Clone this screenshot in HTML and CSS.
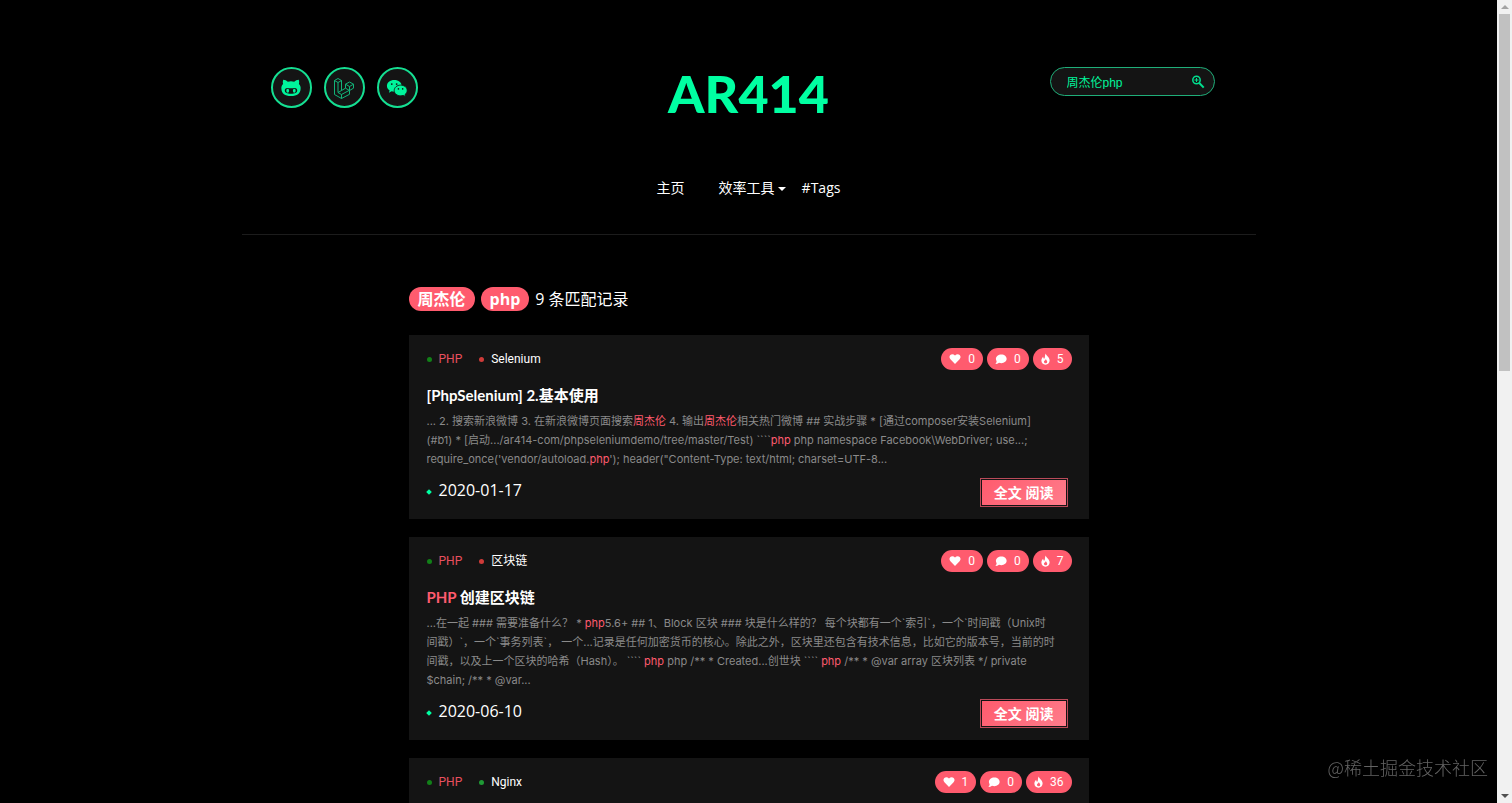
FILE: index.html
```html
<!DOCTYPE html>
<html lang="zh-CN">
<head>
    <meta charset="UTF-8">
    <meta name="viewport" content="width=device-width, initial-scale=1.0">
    <title>AR414</title>
    <link rel="stylesheet" href="styles.css">
</head>
<body>
    <svg class="sprite" aria-hidden="true">
        <symbol id="heart" viewBox="0 0 16 16"><path d="M8 14.5 1.9 8.3C-2 4.2 3.8-1 8 3.4 12.2-1 18 4.2 14.1 8.3z"/></symbol>
        <symbol id="comment" viewBox="0 0 16 16"><path d="M8.5 2C12.700 2 15.500 4.500 15.500 7.800S12.500 13.500 8.500 13.500c-1.100 0-2.200-.200-3.100-.600C4 14 2.300 14.500.500 14.500c1-1 1.600-2.200 1.700-3.500C1.500 10.100 1.200 9 1.200 7.800 1.200 4.500 4.300 2 8.500 2z"/></symbol>
        <symbol id="fire" viewBox="2 0 12 16"><path fill-rule="evenodd" d="M8.300.500c.300 2.900 5.200 4.700 5.200 9.200 0 3.400-2.400 5.800-5.500 5.800s-5.500-2.300-5.500-5.500c0-2.200 1-3.800 2.500-5.100 0 1.400.3 2.400 1.300 2.700C7.900 6.200 6.600 3 8.300.500zM8.500 8c-.2 1.800-2.600 2-2.600 3.700 0 1.200 1 2 2.200 2s2.200-.8 2.200-2.100C10.300 10.100 8.900 9.600 8.500 8z"/></symbol>
    </svg>

    <div class="page">
        <header class="header">
            <div class="top">
                <div class="social">
                    <a href="#github" aria-label="GitHub">
                        <svg width="20" height="18" viewBox="0 0 20 18"><path fill="currentColor" fill-rule="evenodd" d="M2.300.800c1.700 0 3.200.8 4.500 1.900a16 16 0 0 1 6.400 0C14.500 1.600 16 .8 17.700.800c.6 1.400.6 2.900.2 4.200C19.300 6.300 19.800 8 19.600 10c-.4 4.700-3.300 7-9.600 7S.8 14.700.400 10C.2 8 .7 6.300 2.100 5 1.700 3.700 1.700 2.200 2.300.800zM6.300 9c-1.800 0-2.500 1.200-2.500 2.600 0 2.500 2.200 3.200 6.200 3.200s6.200-.7 6.200-3.200c0-1.400-.7-2.600-2.500-2.600-1.300 0-2.300.3-3.700.3S7.600 9 6.300 9z"/><ellipse cx="6.700" cy="11.800" rx="1.400" ry="2" fill="currentColor"/><ellipse cx="13.300" cy="11.800" rx="1.400" ry="2" fill="currentColor"/></svg>
                    </a>
                    <a href="#laravel" aria-label="Laravel">
                        <svg width="22" height="22" viewBox="0 0 22 22"><path fill="none" stroke="currentColor" stroke-width="1" stroke-linejoin="round" d="M1.500 3.500 5 1.500l3.500 2v10l4-2.300v-4L16.500 5l4 2.200v4l-4 2.300v3.800l-8 4.200-7-4zM1.500 3.500l3.500 2 3.500-2M5 5.500v10l3.500 2 8-4.300M8.500 17.500v4M12.500 7.200l4 2.300 4-2.300M16.500 9.500v4M12.500 11.200l4 2.300M5 15.500l3.500-2"/></svg>
                    </a>
                    <a href="#wechat" aria-label="WeChat">
                        <svg width="22" height="18" viewBox="0 0 24 20"><path fill="currentColor" d="M9 1C4.200 1 .800 3.900.800 7.600c0 2.200 1.100 4 3 5.200L3 15.200l3-1.500c.9.300 1.900.5 3 .5C13.800 14.200 17.200 11.300 17.200 7.600S13.800 1 9 1z"/><path fill="currentColor" stroke="#141414" d="M16 6.800c4 0 7.300 2.500 7.300 6 0 1.900-.9 3.400-2.400 4.500l.6 2.200-2.600-1.300c-.9.300-1.800.5-2.900.5-4 0-7.100-2.500-7.100-5.900s3.100-6 7.100-6z"/><g fill="#141414"><circle cx="6.200" cy="5.600" r="1"/><circle cx="11.600" cy="5.600" r="1"/><circle cx="13.600" cy="11" r=".9"/><circle cx="18.300" cy="11" r=".9"/></g></svg>
                    </a>
                </div>
                <a class="logo" href="#home">AR414</a>
                <form class="search">
                    <input type="text" value="周杰伦php" aria-label="搜索">
                    <button type="button" aria-label="搜索">
                        <svg width="14" height="14" viewBox="0 0 14 14" fill="none" stroke="currentColor"><circle cx="5.500" cy="5" r="3.700" stroke-width="1.500"/><path stroke-width="2" d="m8.300 8 4.400 4.600"/><path d="M5.500 3v4M3.500 5h4"/></svg>
                    </button>
                </form>
            </div>
            <nav class="nav">
                <a href="#home">主页</a>
                <a class="dropdown" href="#tools">效率工具</a>
                <a href="#tags">#Tags</a>
            </nav>
        </header>

        <main class="results">
            <h1 class="summary"><mark>周杰伦</mark><mark>php</mark><span>9 条匹配记录</span></h1>

            <article class="card">
                <div class="meta">
                    <a class="cat php" href="#php">PHP</a>
                    <a class="cat red" href="#selenium">Selenium</a>
                    <div class="stats">
                        <span><svg><use href="#heart"/></svg>0</span>
                        <span><svg><use href="#comment"/></svg>0</span>
                        <span><svg class="fire"><use href="#fire"/></svg>5</span>
                    </div>
                </div>
                <h2>[PhpSelenium] 2.基本使用</h2>
                <p>... 2. 搜索新浪微博 3. 在新浪微博页面搜索<em>周杰伦</em> 4. 输出<em>周杰伦</em>相关热门微博 ## 实战步骤 * [通过composer安装Selenium]<br>(#b1) * [启动.../ar414-com/phpseleniumdemo/tree/master/Test) ````<em>php</em> php namespace Facebook\WebDriver; use...;<br>require_once('vendor/autoload.<em>php</em>'); header("Content-Type: text/html; charset=UTF-8...</p>
                <div class="foot">
                    <time datetime="2020-01-17">2020-01-17</time>
                    <a class="more" href="#post-1">全文 阅读</a>
                </div>
            </article>

            <article class="card">
                <div class="meta">
                    <a class="cat php" href="#php">PHP</a>
                    <a class="cat red" href="#blockchain">区块链</a>
                    <div class="stats">
                        <span><svg><use href="#heart"/></svg>0</span>
                        <span><svg><use href="#comment"/></svg>0</span>
                        <span><svg class="fire"><use href="#fire"/></svg>7</span>
                    </div>
                </div>
                <h2><em>PHP</em> 创建区块链</h2>
                <p>...在一起 ### 需要准备什么？ * <em>php</em>5.6+ ## 1、Block 区块 ### 块是什么样的？ 每个块都有一个`索引`，一个`时间戳（Unix时<br>间戳）`，一个`事务列表`， 一个...记录是任何加密货币的核心。除此之外，区块里还包含有技术信息，比如它的版本号，当前的时<br>间戳，以及上一个区块的哈希（Hash）。 ```` <em>php</em> php /** * Created...创世块 ```` <em>php</em> /** * @var array 区块列表 */ private<br>$chain; /** * @var...</p>
                <div class="foot">
                    <time datetime="2020-06-10">2020-06-10</time>
                    <a class="more" href="#post-2">全文 阅读</a>
                </div>
            </article>

            <article class="card">
                <div class="meta">
                    <a class="cat php" href="#php">PHP</a>
                    <a class="cat green" href="#nginx">Nginx</a>
                    <div class="stats">
                        <span><svg><use href="#heart"/></svg>1</span>
                        <span><svg><use href="#comment"/></svg>0</span>
                        <span><svg class="fire"><use href="#fire"/></svg>36</span>
                    </div>
                </div>
            </article>
        </main>
    </div>

    <div class="scrollbar" aria-hidden="true">
        <i class="up"></i>
        <div class="thumb"></div>
        <i class="down"></i>
    </div>
    <div class="watermark">@稀土掘金技术社区</div>
</body>
</html>
```
FILE: styles.css
```css
* {
    margin: 0;
    padding: 0;
    box-sizing: border-box;
}

body {
    display: flex;
    height: 100vh;
    overflow: hidden;
    background: #000;
    color: #fff;
    font-family: "Open Sans", "Noto Sans CJK SC", sans-serif;
    font-size: 14px;
}

a {
    color: inherit;
    text-decoration: none;
}

em {
    color: #ff5b6e;
    font-style: normal;
}

.sprite {
    position: absolute;
    width: 0;
    height: 0;
}

.page {
    flex: 1;
    overflow: hidden;
}

/* header */
.header {
    max-width: 1014px;
    margin: 0 auto;
    padding-top: 67px;
    border-bottom: 1px solid #1c1c1c;
}

.top {
    display: grid;
    grid-template-columns: 1fr auto 1fr;
    align-items: start;
    height: 104px;
    padding: 0 29px;
}

.social {
    display: flex;
    gap: 12px;
}

.social a {
    display: flex;
    align-items: center;
    justify-content: center;
    width: 41px;
    height: 41px;
    border: 2px solid #15df92;
    border-radius: 50%;
    background: #141414;
    color: #00f59b;
}

.social a:nth-child(2) {
    color: #12b378;
}

.logo {
    color: #00ffa2;
    font-family: Lato, sans-serif;
    font-size: 52px;
    font-weight: 900;
    line-height: 52px;
}

.search {
    display: flex;
    align-items: center;
    justify-self: end;
    width: 165px;
    height: 29px;
    margin-right: 12px;
    padding: 0 9px 0 16px;
    border: 1px solid #1fae79;
    border-radius: 15px;
    background: #141414;
}

.search input {
    flex: 1;
    min-width: 0;
    border: 0;
    outline: 0;
    background: transparent;
    color: #00f59b;
    font-family: "Liberation Sans", "Noto Sans CJK SC", sans-serif;
    font-size: 12px;
}

.search button {
    display: flex;
    border: 0;
    background: transparent;
    color: #00e08f;
    cursor: pointer;
}

.nav {
    display: flex;
    justify-content: center;
    height: 63px;
    line-height: 34px;
}

.nav a:nth-child(2) {
    margin: 0 16px 0 34px;
}

.dropdown::after {
    content: "";
    display: inline-block;
    margin-left: 3px;
    border: 4px solid transparent;
    border-top-color: #fff;
    border-bottom: 0;
    vertical-align: middle;
}

/* search results */
.results {
    display: flex;
    flex-direction: column;
    gap: 18px;
    max-width: 680px;
    margin: 0 auto;
    padding-top: 52px;
}

.summary {
    display: flex;
    align-items: center;
    gap: 6px;
    margin-bottom: 6px;
    font-size: 16px;
    font-weight: 400;
    line-height: 24px;
}

.summary mark {
    padding: 0 9px;
    border-radius: 12px;
    background: #ff5b6e;
    color: #fff;
    font-weight: 700;
}

.card {
    padding: 13px 17px 13px 18px;
    background: #141414;
}

.meta {
    display: flex;
    align-items: center;
    gap: 17px;
    height: 22px;
    font-family: Roboto, "Noto Sans CJK SC", sans-serif;
    font-size: 12px;
    line-height: 22px;
}

.cat::before {
    content: "";
    display: inline-block;
    width: 5px;
    height: 5px;
    margin: 0 7px 1px 0;
    border-radius: 50%;
    background: #cf3b39;
}

.cat.php {
    color: #e8505f;
}

.cat.php::before {
    background: #128018;
}

.cat.green::before {
    background: #1f9a35;
}

.stats {
    display: flex;
    gap: 4px;
    margin-left: auto;
}

.stats span {
    display: flex;
    align-items: center;
    gap: 7px;
    padding: 0 8px;
    border-radius: 11px;
    background: #ff5b6e;
}

.stats svg {
    width: 12px;
    height: 12px;
    fill: #fff;
}

.stats .fire {
    width: 9px;
}

.card h2 {
    margin-top: 13px;
    font-family: Lato, "Noto Sans CJK SC", sans-serif;
    font-size: 15px;
    line-height: 24px;
}

.card p {
    margin-top: 5px;
    color: #8a8a8a;
    font-family: Inter, "Noto Sans CJK SC", sans-serif;
    font-size: 11px;
    line-height: 19px;
    white-space: nowrap;
}

.foot {
    display: flex;
    align-items: flex-start;
    justify-content: space-between;
    margin-top: 8px;
    padding-right: 5px;
}

.foot time {
    font-size: 16px;
    line-height: 26px;
}

.foot time::before {
    content: "";
    display: inline-block;
    width: 4px;
    height: 4px;
    margin: 0 8px 2px 0;
    background: #00ffa2;
    transform: rotate(45deg);
}

.more {
    margin-top: 2px;
    padding: 0 12px;
    border: 1px solid #141414;
    outline: 1px solid #b94a59;
    background: linear-gradient(135deg, #ff5b6e, #ff7c8b);
    background-clip: padding-box;
    font-size: 14px;
    font-weight: 700;
    line-height: 25px;
}

/* window chrome */
.scrollbar {
    display: flex;
    flex-direction: column;
    align-items: center;
    width: 15px;
    padding: 5px 0;
    background: #f1f1f1;
}

.scrollbar i {
    border: 4px solid transparent;
}

.scrollbar .up {
    border-top: 0;
    border-bottom-color: #a3a3a3;
}

.scrollbar .down {
    margin-top: auto;
    border-top-color: #505050;
    border-bottom: 0;
}

.thumb {
    width: 11px;
    height: 45%;
    margin-top: 5px;
    background: #c1c1c1;
}

.watermark {
    position: fixed;
    right: 24px;
    bottom: 23px;
    color: #636363;
    font-family: "Noto Sans CJK SC", sans-serif;
    font-size: 18px;
    font-weight: 300;
    line-height: 26px;
}
```
